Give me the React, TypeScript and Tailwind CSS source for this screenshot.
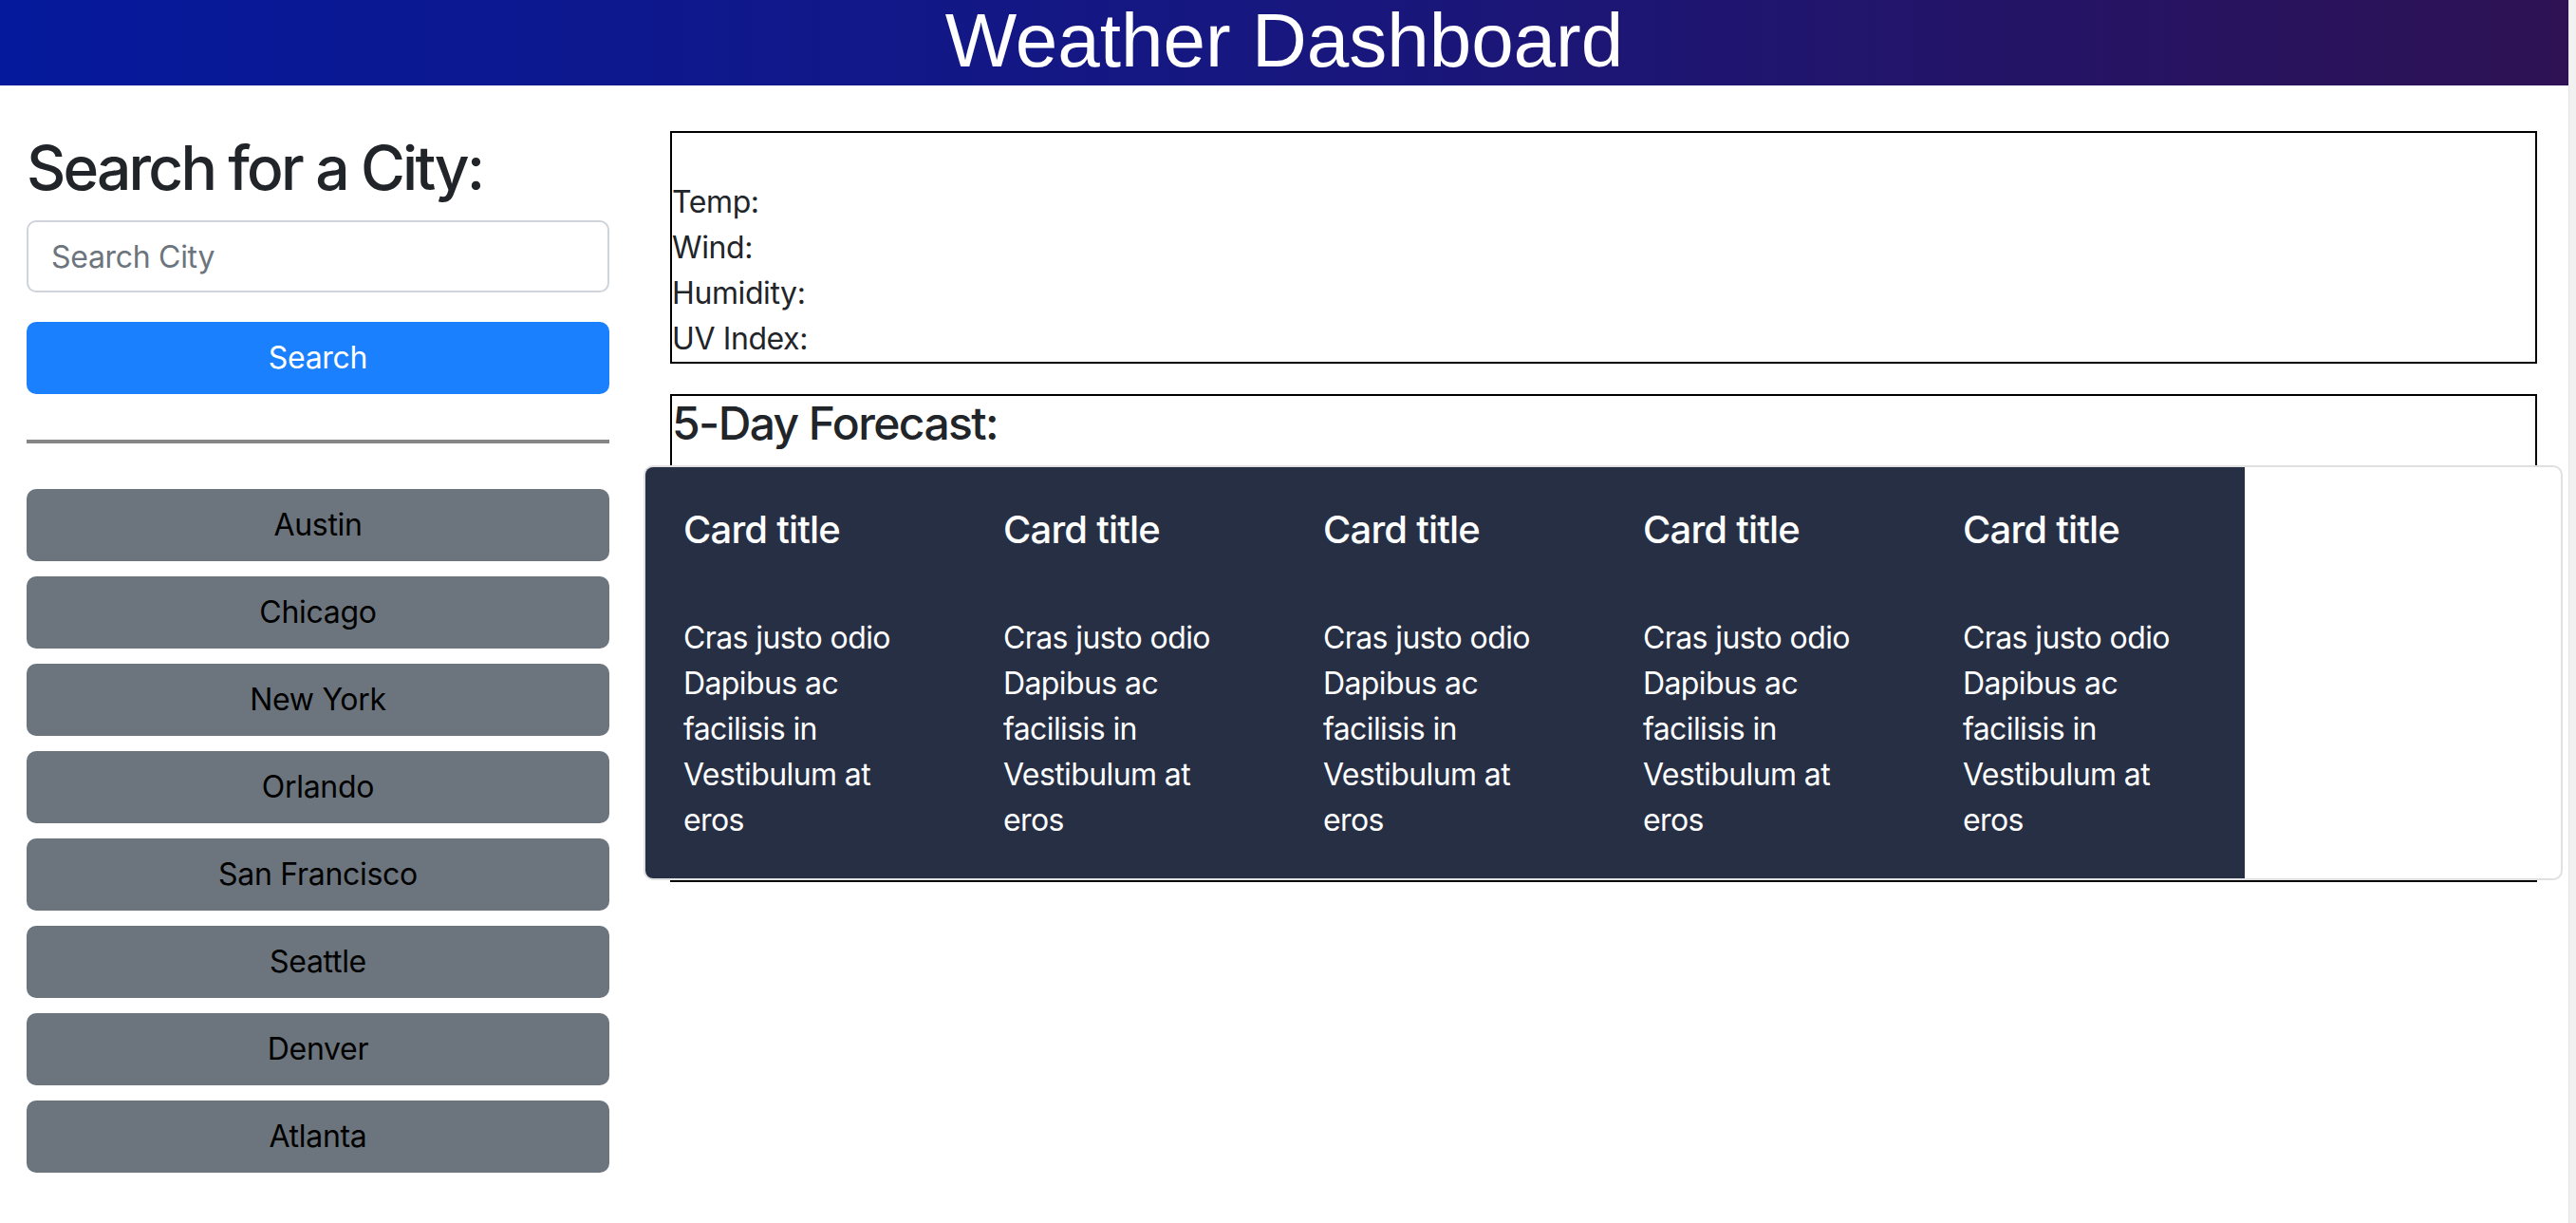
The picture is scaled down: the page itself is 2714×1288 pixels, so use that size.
import React from 'react';

const cities = ['Austin', 'Chicago', 'New York', 'Orlando', 'San Francisco', 'Seattle', 'Denver', 'Atlanta'];
const bodyLines = ['Cras justo odio', 'Dapibus ac', 'facilisis in', 'Vestibulum at', 'eros'];

const sans = "font-['Inter','Noto_Sans',sans-serif]";

function ForecastCard() {
  return (
    <div className="w-[337px] shrink-0 bg-[#262f44] pl-[40px] pr-[20px] pt-[42px] pb-[37px] text-white">
      <h5 className="text-[40px] leading-[48px] font-medium tracking-[-0.8px] mb-[66px]">Card title</h5>
      <p className="text-[32px] leading-[48px] tracking-[-0.6px]">
        {bodyLines.map((l) => (
          <span key={l} className="block">
            {l}
          </span>
        ))}
      </p>
    </div>
  );
}

export default function App() {
  return (
    <div className={`flex w-[2714px] min-h-[1288px] bg-white text-[#212529] ${sans}`}>
      <div className="w-[2706px] shrink-0">
        {/* Header */}
        <header className="h-[90px] bg-[linear-gradient(to_right,#05199c,#17177f_50%,#2e1254)] flex justify-center">
          <h1 className="font-['Liberation_Sans',Arial,sans-serif] text-[80px] leading-[86px] text-white">
            Weather Dashboard
          </h1>
        </header>

        <div className="flex pt-[48px]">
          {/* Sidebar */}
          <aside className="w-[680px] shrink-0 pl-[28px] pr-[38px]">
            <h2 className="text-[64px] leading-[77px] font-medium tracking-[-2.8px] mb-[17px]">Search for a City:</h2>
            <input
              type="text"
              placeholder="Search City"
              className="block w-full h-[76px] border-2 border-[#ced4da] rounded-[10px] px-[24px] text-[32px] tracking-[-0.3px] placeholder:text-[#6c757d] outline-none"
            />
            <button className="mt-[31px] w-full h-[76px] rounded-[10px] bg-[#1a80fd] text-white text-[32px] tracking-[-0.3px]">
              Search
            </button>
            <div className="mt-[48px] h-[4px] bg-[#858585]" />
            <div className="mt-[48px] flex flex-col gap-[16px]">
              {cities.map((c) => (
                <button key={c} className="w-full h-[76px] rounded-[10px] bg-[#6c757d] text-black text-[32px] tracking-[-0.3px]">
                  {c}
                </button>
              ))}
            </div>
          </aside>

          {/* Main */}
          <main className="flex-1 min-w-0 pl-[26px] pr-[33px]">
            <section className="border-2 border-black pt-[49px] text-[32px] leading-[48px] tracking-[-0.4px]">
              <p>Temp:</p>
              <p>Wind:</p>
              <p>Humidity:</p>
              <p>UV Index:</p>
            </section>

            <section className="mt-[32px] border-2 border-black">
              <h4 className="text-[48px] leading-[58px] font-medium tracking-[-1.6px] mb-[15px]">5-Day Forecast:</h4>
              <div className="-ml-[30px] w-[2022px] flex border-2 border-[#e0e0e0] rounded-[10px] overflow-hidden bg-white">
                {[0, 1, 2, 3, 4].map((i) => (
                  <ForecastCard key={i} />
                ))}
              </div>
            </section>
          </main>
        </div>
      </div>
      <div className="w-[8px] shrink-0 bg-[#f1f1f1] border-l border-[#e6e6e6]" />
    </div>
  );
}
